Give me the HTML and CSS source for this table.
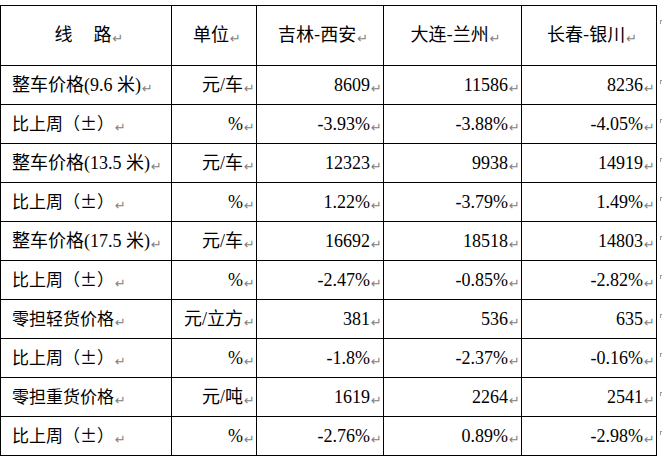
FILE: index.html
```html
<!DOCTYPE html>
<html lang="zh">
<head>
<meta charset="utf-8">
<title>线路价格</title>
<link rel="stylesheet" href="styles.css">
</head>
<body>
<table class="rates">
  <colgroup>
    <col class="c-route"><col class="c-unit"><col class="c-a"><col class="c-b"><col class="c-c"><col class="c-eor">
  </colgroup>
  <thead>
    <tr class="head">
      <th>线<span class="gap"> </span>路<span class="pm">↵</span></th>
      <th>单位<span class="pm">↵</span></th>
      <th>吉林-西安<span class="pm">↵</span></th>
      <th>大连-兰州<span class="pm">↵</span></th>
      <th>长春-银川<span class="pm">↵</span></th>
      <td class="eor"><span class="eor-mark"></span></td>
    </tr>
  </thead>
  <tbody>
    <tr>
      <td class="name mix">整车价格(9.6 米)<span class="pm">↵</span></td>
      <td class="unit">元/车<span class="pm">↵</span></td>
      <td class="num">8609<span class="pm">↵</span></td>
      <td class="num">11586<span class="pm">↵</span></td>
      <td class="num">8236<span class="pm">↵</span></td>
      <td class="eor"><span class="eor-mark"></span></td>
    </tr>
    <tr>
      <td class="name">比上周（±）<span class="pm">↵</span></td>
      <td class="unit">%<span class="pm">↵</span></td>
      <td class="num">-3.93%<span class="pm">↵</span></td>
      <td class="num">-3.88%<span class="pm">↵</span></td>
      <td class="num">-4.05%<span class="pm">↵</span></td>
      <td class="eor"><span class="eor-mark"></span></td>
    </tr>
    <tr>
      <td class="name mix">整车价格(13.5 米)<span class="pm">↵</span></td>
      <td class="unit">元/车<span class="pm">↵</span></td>
      <td class="num">12323<span class="pm">↵</span></td>
      <td class="num">9938<span class="pm">↵</span></td>
      <td class="num">14919<span class="pm">↵</span></td>
      <td class="eor"><span class="eor-mark"></span></td>
    </tr>
    <tr>
      <td class="name">比上周（±）<span class="pm">↵</span></td>
      <td class="unit">%<span class="pm">↵</span></td>
      <td class="num">1.22%<span class="pm">↵</span></td>
      <td class="num">-3.79%<span class="pm">↵</span></td>
      <td class="num">1.49%<span class="pm">↵</span></td>
      <td class="eor"><span class="eor-mark"></span></td>
    </tr>
    <tr>
      <td class="name mix">整车价格(17.5 米)<span class="pm">↵</span></td>
      <td class="unit">元/车<span class="pm">↵</span></td>
      <td class="num">16692<span class="pm">↵</span></td>
      <td class="num">18518<span class="pm">↵</span></td>
      <td class="num">14803<span class="pm">↵</span></td>
      <td class="eor"><span class="eor-mark"></span></td>
    </tr>
    <tr>
      <td class="name">比上周（±）<span class="pm">↵</span></td>
      <td class="unit">%<span class="pm">↵</span></td>
      <td class="num">-2.47%<span class="pm">↵</span></td>
      <td class="num">-0.85%<span class="pm">↵</span></td>
      <td class="num">-2.82%<span class="pm">↵</span></td>
      <td class="eor"><span class="eor-mark"></span></td>
    </tr>
    <tr>
      <td class="name">零担轻货价格<span class="pm">↵</span></td>
      <td class="unit">元/立方<span class="pm">↵</span></td>
      <td class="num">381<span class="pm">↵</span></td>
      <td class="num">536<span class="pm">↵</span></td>
      <td class="num">635<span class="pm">↵</span></td>
      <td class="eor"><span class="eor-mark"></span></td>
    </tr>
    <tr>
      <td class="name">比上周（±）<span class="pm">↵</span></td>
      <td class="unit">%<span class="pm">↵</span></td>
      <td class="num">-1.8%<span class="pm">↵</span></td>
      <td class="num">-2.37%<span class="pm">↵</span></td>
      <td class="num">-0.16%<span class="pm">↵</span></td>
      <td class="eor"><span class="eor-mark"></span></td>
    </tr>
    <tr>
      <td class="name">零担重货价格<span class="pm">↵</span></td>
      <td class="unit">元/吨<span class="pm">↵</span></td>
      <td class="num">1619<span class="pm">↵</span></td>
      <td class="num">2264<span class="pm">↵</span></td>
      <td class="num">2541<span class="pm">↵</span></td>
      <td class="eor"><span class="eor-mark"></span></td>
    </tr>
    <tr>
      <td class="name">比上周（±）<span class="pm">↵</span></td>
      <td class="unit">%<span class="pm">↵</span></td>
      <td class="num">-2.76%<span class="pm">↵</span></td>
      <td class="num">0.89%<span class="pm">↵</span></td>
      <td class="num">-2.98%<span class="pm">↵</span></td>
      <td class="eor"><span class="eor-mark"></span></td>
    </tr>
  </tbody>
</table>
</body>
</html>
```
FILE: styles.css
```css
html, body {
  margin: 0;
  padding: 0;
  background: #fff;
}
body {
  padding-top: 5px;
  font-family: "Noto Sans CJK SC", sans-serif;
  color: #000;
}
.rates {
  border-collapse: collapse;
  table-layout: fixed;
  width: 662px;
}
.c-route { width: 171px; }
.c-unit { width: 85px; }
.c-a { width: 127px; }
.c-b { width: 138px; }
.c-c { width: 135px; }
.c-eor { width: 6px; }

.rates th,
.rates td {
  border: 1px solid #000;
  padding: 0;
  font-size: 18px;
  line-height: 20px;
  vertical-align: middle;
  white-space: nowrap;
  overflow: hidden;
}
.rates th {
  font-weight: normal;
  text-align: center;
  height: 59px;
  font-family: "Noto Sans CJK SC", sans-serif;
  padding-left: 6px;
}
.gap {
  display: inline-block;
  width: 21px;
}
.rates tbody td {
  height: 35px;
  padding-top: 3px;
}
.rates .name {
  text-align: left;
  padding-left: 11px;
  font-family: "Noto Sans CJK SC", sans-serif;
  font-size: 17px;
}
.rates .name.mix {
  font-family: "Liberation Serif", "Noto Sans CJK SC", serif;
  font-size: 18px;
}
.rates .unit {
  text-align: right;
  padding-right: 1px;
  font-family: "Liberation Serif", "Noto Sans CJK SC", serif;
}
.rates .num {
  text-align: right;
  padding-right: 1px;
  font-family: "Liberation Serif", serif;
}
.pm {
  font-family: "DejaVu Sans", sans-serif;
  font-size: 13px;
  color: #808080;
  margin-left: 1px;
  vertical-align: -2px;
}
.rates .eor {
  border: none;
  padding: 0;
  vertical-align: top;
}
.eor-mark {
  display: block;
  margin: 14px 0 0 3px;
  width: 3px;
  height: 3px;
  border-top: 1px solid #999;
  border-left: 1px solid #999;
}
```
